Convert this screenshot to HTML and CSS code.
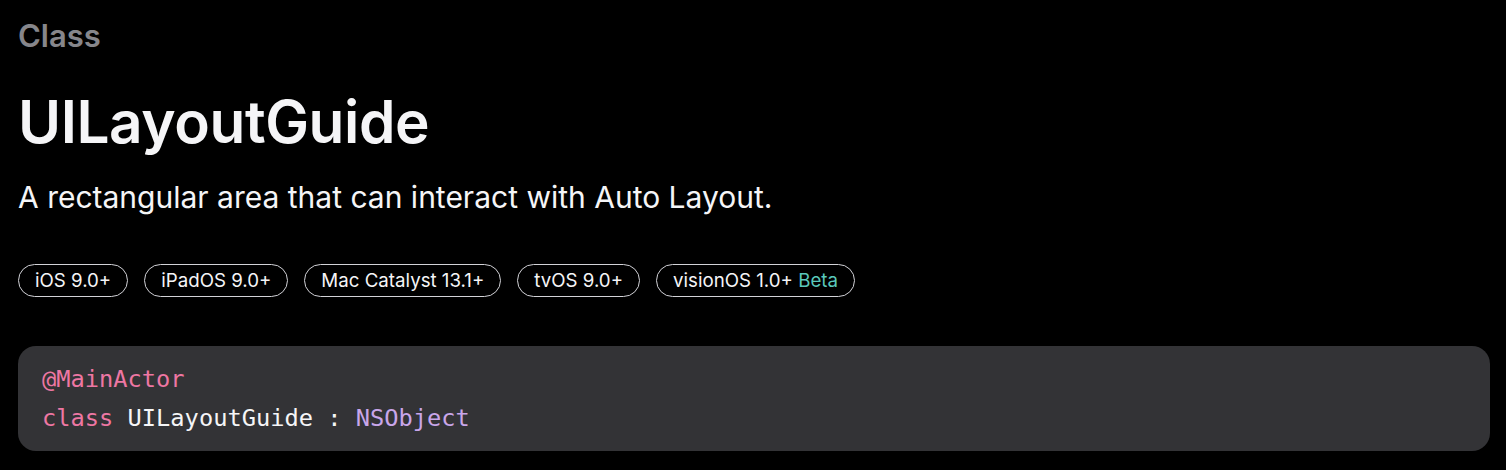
FILE: index.html
```html
<!DOCTYPE html>
<html lang="en">
<head>
  <meta charset="UTF-8">
  <title>UILayoutGuide</title>
  <link rel="stylesheet" href="styles.css">
</head>
<body>
  <div class="topic">
    <div class="eyebrow">Class</div>
    <h1 class="title">UILayoutGuide</h1>
    <p class="abstract">A rectangular area that can interact with Auto Layout.</p>
    <ul class="platforms">
      <li class="badge">iOS 9.0+</li>
      <li class="badge">iPadOS 9.0+</li>
      <li class="badge">Mac Catalyst 13.1+</li>
      <li class="badge">tvOS 9.0+</li>
      <li class="badge">visionOS 1.0+ <span class="beta">Beta</span></li>
    </ul>
    <pre class="declaration"><span class="kw">@MainActor</span>
<span class="kw">class</span> UILayoutGuide : <span class="type">NSObject</span></pre>
  </div>
</body>
</html>
```

FILE: styles.css
```css
body {
  margin: 0;
  background-color: #000;
  color: #f5f5f7;
  font-family: Inter, "Noto Sans", sans-serif;
}

.topic {
  padding: 0 16px 0 18px;
}

.eyebrow {
  padding-top: 17px;
  font-size: 31px;
  font-weight: 600;
  line-height: 38px;
  color: #86868b;
}

.title {
  margin: 35px 0 0;
  font-size: 58.5px;
  font-weight: 600;
  line-height: 64px;
  letter-spacing: -0.4px;
}

.abstract {
  margin: 24px 0 0;
  font-size: 30px;
  line-height: 38px;
}

.platforms {
  display: flex;
  gap: 16px;
  margin: 48px 0 0;
  padding: 0;
  list-style: none;
}

.badge {
  padding: 0 16px;
  height: 31px;
  line-height: 31px;
  font-size: 18.7px;
  border: 1px solid #d2d2d7;
  border-radius: 17px;
}

.beta {
  color: #5ac8bb;
}

.declaration {
  margin: 49px 0 0;
  padding: 14px 24px 13px;
  background-color: #333336;
  border-radius: 18px;
  font-family: "DejaVu Sans Mono", monospace;
  font-size: 23.7px;
  line-height: 39px;
  color: #f5f5f7;
}

.kw {
  color: #ee77a3;
}

.type {
  color: #c9a6ea;
}
```
